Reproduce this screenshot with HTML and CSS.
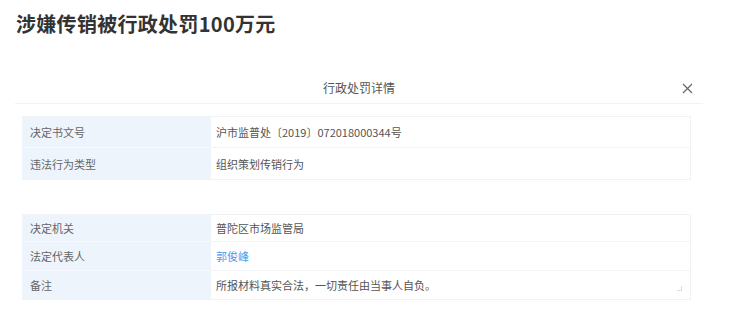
FILE: index.html
```html
<!DOCTYPE html>
<html lang="zh-CN">
<head>
<meta charset="utf-8">
<link rel="stylesheet" href="styles.css">
</head>
<body>
<h1 class="page-title">涉嫌传销被行政处罚100万元</h1>
<div class="modal">
  <div class="modal-header">
    <span class="modal-title">行政处罚详情</span>
    <span class="modal-close"><svg width="11" height="11" viewBox="0 0 11 11"><path d="M1 1L10 10M10 1L1 10" stroke="#666" stroke-width="1.2" fill="none"/></svg></span>
  </div>
  <div class="info-table t1">
    <div class="cell label r-a">决定书文号</div>
    <div class="cell value r-a">沪市监普处〔2019〕072018000344号</div>
    <div class="cell label r-b last">违法行为类型</div>
    <div class="cell value r-b last">组织策划传销行为</div>
  </div>
  <div class="info-table t2">
    <div class="cell label r-c">决定机关</div>
    <div class="cell value r-c">普陀区市场监管局</div>
    <div class="cell label r-d">法定代表人</div>
    <div class="cell value r-d"><span class="link">郭俊峰</span></div>
    <div class="cell label r-e last">备注</div>
    <div class="cell value r-e last note">所报材料真实合法，一切责任由当事人自负。<span class="resize"></span></div>
  </div>
</div>
</body>
</html>
```
FILE: styles.css
```css
* { box-sizing: border-box; }
body {
  margin: 0;
  background: #fff;
  font-family: "Noto Sans CJK SC", "Noto Sans", sans-serif;
  color: #333;
}
.page-title {
  margin: 10px 0 0 16px;
  font-size: 20px;
  line-height: 28px;
  font-weight: 700;
  color: #333;
  letter-spacing: 0.3px;
}
.modal {
  margin: 37px 0 0 15px;
  width: 688px;
}
.modal-header {
  height: 29px;
  border-bottom: 1px solid #f1f2f4;
  display: flex;
  align-items: center;
  justify-content: center;
  position: relative;
  padding-bottom: 2px;
}
.modal-title {
  font-size: 12px;
  color: #555;
  line-height: 16px;
}
.modal-close {
  position: absolute;
  right: 10px;
  top: 8px;
  display: flex;
}
.info-table {
  margin-left: 7px;
  width: 669px;
  display: grid;
  grid-template-columns: 189px 1fr;
  border: 1px solid #f1f2f4;
  border-left: none;
}
.t1 { margin-top: 12px; }
.t2 { margin-top: 34px; }
.cell {
  display: flex;
  align-items: center;
  font-size: 11px;
  border-bottom: 1px solid #f1f3f6;
}
.cell.last { border-bottom: none; }
.label {
  background: #eef4fb;
  color: #666;
  padding-left: 8px;
  border-bottom-color: #f6f9fd;
}
.value {
  color: #555;
  padding-left: 5px;
}
.r-a { height: 31px; }
.r-b { height: 31px; }
.r-c { height: 27px; }
.r-d { height: 29px; }
.r-e { height: 28px; }
.link { color: #4a9ef2; }
.note { position: relative; }
.resize {
  position: absolute;
  right: 8px;
  bottom: 8px;
  width: 5px;
  height: 5px;
  border-right: 1px solid #ddd;
  border-bottom: 1px solid #ddd;
}
```
